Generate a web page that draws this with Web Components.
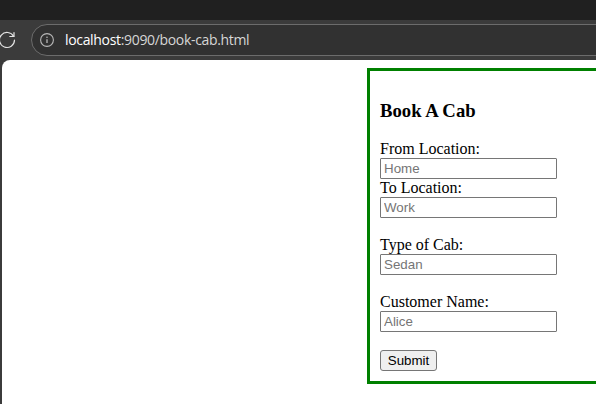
<!DOCTYPE html>
<html lang="en">
<head>
<meta charset="utf-8">
<title>Book A Cab</title>
<style>
html, body { margin: 0; height: 100%; overflow: hidden; background: #3b3b3b; }
</style>
</head>
<body>
<browser-window>
  <address-bar slot="toolbar" host="localhost" path=":9090/book-cab.html"></address-bar>
  <cab-form>
    <form-field label="From Location:" hint="Home"></form-field>
    <form-field label="To Location:" hint="Work"></form-field>
    <form-field label="Type of Cab:" hint="Sedan" spaced></form-field>
    <form-field label="Customer Name:" hint="Alice" spaced></form-field>
  </cab-form>
</browser-window>
<script>
const define = (name, render) => customElements.define(name, class extends HTMLElement {
  constructor() {
    super();
    this.attachShadow({ mode: 'open' });
  }
  connectedCallback() {
    this.shadowRoot.innerHTML = render(this);
  }
});

define('browser-window', () => `
  <style>
    :host { display: flex; flex-direction: column; width: 596px; height: 404px; overflow: hidden; background: #3b3b3b; }
    .tabs { height: 20px; flex: none; background: #202020; }
    .page { flex: 1; margin-left: 2px; padding: 8px 0 0 365px; background: #fff; border-top-left-radius: 8px; overflow: hidden; }
  </style>
  <div class="tabs"></div>
  <slot name="toolbar"></slot>
  <div class="page"><slot></slot></div>`);

define('address-bar', el => `
  <style>
    :host { display: flex; height: 40px; flex: none; box-sizing: border-box; padding-top: 4px; background: #3b3b3b; }
    .reload { width: 31px; height: 32px; flex: none; }
    .pill { flex: none; width: 600px; height: 32px; box-sizing: border-box; border: 1px solid #6c6c6c; border-radius: 16px; background: #313131;
      display: flex; align-items: center; padding-left: 7px; }
    .info { flex: none; margin-right: 10px; }
    .url { font: 14px/20px "Open Sans", "Noto Sans", sans-serif; letter-spacing: -0.33px; color: #d6d6d6; white-space: nowrap; }
    .host { color: #fff; }
  </style>
  <svg class="reload" viewBox="0 0 31 32" fill="none" stroke="#e4e4e4" stroke-width="1.2" stroke-linecap="round">
    <path d="M13.6 12.4A7.5 7.5 0 1 0 14.5 16"/><path d="M14 8.5V12.5H9.8"/>
  </svg>
  <div class="pill">
    <svg class="info" width="16" height="16" viewBox="0 0 16 16" fill="none" stroke="#b8b8b8">
      <circle cx="8" cy="8" r="6.4" stroke-width="1.1"/>
      <path d="M8 7.2V11" stroke-width="1.3"/><circle cx="8" cy="5.2" r=".8" fill="#b8b8b8" stroke="none"/>
    </svg>
    <div class="url"><span class="host">${el.getAttribute('host')}</span>${el.getAttribute('path')}</div>
  </div>`);

define('cab-form', () => `
  <style>
    :host { display: block; box-sizing: border-box; width: 400px; height: 316px; border: 3px solid green; padding: 10px;
      font: 16px/18px "Liberation Serif", serif; color: #000; }
    h3 { margin: 19px 0; font-size: 18.72px; line-height: 21px; }
    button { display: block; box-sizing: border-box; width: 57px; height: 21px; margin: 18px 0 0; padding: 0;
      border: 1px solid #767676; border-radius: 3px; background: #efefef; color: #000;
      font: 13.333px/15px "Liberation Sans", sans-serif; text-align: center; }
  </style>
  <h3>Book A Cab</h3>
  <slot></slot>
  <button type="button">Submit</button>`);

define('form-field', el => `
  <style>
    :host { display: block; }
    :host([spaced]) { margin-top: 18px; }
    label { display: block; height: 18px; }
    input { display: block; box-sizing: border-box; width: 177px; height: 21px; margin: 0; padding: 1px 3px;
      border: 1px solid #767676; border-radius: 1px; background: #fff; font: 13.333px "Liberation Sans", sans-serif; }
    input::placeholder { color: #757575; }
  </style>
  <label for="value">${el.getAttribute('label')}</label>
  <input id="value" type="text" placeholder="${el.getAttribute('hint')}">`);
</script>
</body>
</html>
